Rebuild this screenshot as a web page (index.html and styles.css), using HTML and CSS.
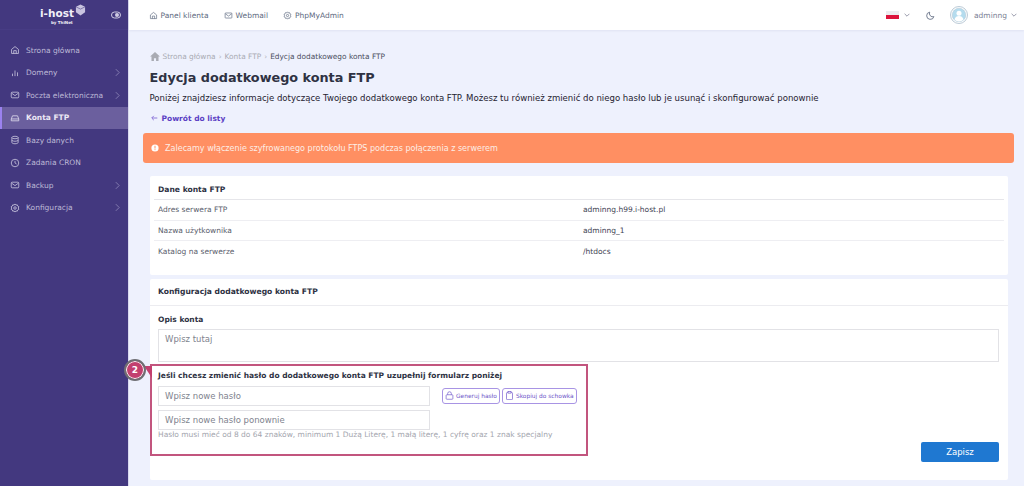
FILE: index.html
```html
<!DOCTYPE html>
<html lang="pl">
<head>
<meta charset="utf-8">
<title>Edycja dodatkowego konta FTP</title>
<link rel="stylesheet" href="styles.css">
</head>
<body>
<div class="app">
  <aside class="sidebar">
    <div class="brand">
      <div class="logo">
        <div class="logo-line"><span class="logo-name">i-host</span>
          <svg class="logo-cube" viewBox="0 0 12 13"><path d="M6 0.5 11 3v6l-5 3.5L1 9V3z" fill="#c9c4e0"/><path d="M1 3l5 2.5L11 3" fill="none" stroke="#43387f" stroke-width=".6"/></svg>
        </div>
        <div class="logo-sub">by ThiNet</div>
      </div>
      <svg class="toggle" viewBox="0 0 10 8"><rect x=".5" y="1" width="9" height="6" rx="3" fill="none" stroke="#cfcbe3"/><circle cx="6" cy="4" r="2" fill="#cfcbe3"/></svg>
    </div>
    <nav class="menu">
      <a class="item"><svg class="ico" viewBox="0 0 16 16"><path d="M2.500 7 8 2.500 13.500 7v6.500h-11zM6 13.500V9h4v4.500"/></svg><span>Strona główna</span></a>
      <a class="item"><svg class="ico" viewBox="0 0 16 16"><path d="M4 13V9M8 13V4M12 13V7"/></svg><span>Domeny</span><svg class="chev" viewBox="0 0 6 10"><path d="M1 1l4 4-4 4"/></svg></a>
      <a class="item"><svg class="ico" viewBox="0 0 16 16"><rect x="2" y="3.500" width="12" height="9" rx="1.500"/><path d="M2.500 5 8 9l5.500-4"/></svg><span>Poczta elektroniczna</span><svg class="chev" viewBox="0 0 6 10"><path d="M1 1l4 4-4 4"/></svg></a>
      <a class="item active"><svg class="ico" viewBox="0 0 16 16"><path d="M2 9.500 4 4.500h8l2 5v3H2zM2 9.500h12"/></svg><span>Konta FTP</span></a>
      <a class="item"><svg class="ico" viewBox="0 0 16 16"><ellipse cx="8" cy="4" rx="5" ry="2"/><path d="M3 4v8c0 1.100 2.200 2 5 2s5-.9 5-2V4M3 8c0 1.100 2.200 2 5 2s5-.9 5-2"/></svg><span>Bazy danych</span></a>
      <a class="item"><svg class="ico" viewBox="0 0 16 16"><circle cx="8" cy="8" r="6"/><path d="M8 4.500V8l2.500 1.500"/></svg><span>Zadania CRON</span></a>
      <a class="item"><svg class="ico" viewBox="0 0 16 16"><rect x="2" y="3.500" width="12" height="9" rx="1.500"/><path d="M2.500 5 8 9l5.500-4"/></svg><span>Backup</span><svg class="chev" viewBox="0 0 6 10"><path d="M1 1l4 4-4 4"/></svg></a>
      <a class="item"><svg class="ico" viewBox="0 0 16 16"><circle cx="8" cy="8" r="2"/><path d="M8 1.500l1.400 1.800 2.200-.4.600 2 1.900.9-.7 2.200.7 2.200-1.900.9-.6 2-2.200-.4L8 14.500l-1.400-1.800-2.200.4-.6-2-1.900-.9.700-2.200-.7-2.200 1.900-.9.600-2 2.200.4z"/></svg><span>Konfiguracja</span><svg class="chev" viewBox="0 0 6 10"><path d="M1 1l4 4-4 4"/></svg></a>
    </nav>
  </aside>
  <div class="main">
    <header class="topbar">
      <div class="toplinks">
        <a class="toplink"><svg class="tico" viewBox="0 0 16 16"><path d="M2.500 7 8 2.500 13.500 7v6.500h-11zM6 13.500V9h4v4.500"/></svg>Panel klienta</a>
        <a class="toplink"><svg class="tico" viewBox="0 0 16 16"><rect x="2" y="3.500" width="12" height="9" rx="1"/><path d="M2.500 5 8 9l5.500-4"/></svg>Webmail</a>
        <a class="toplink"><svg class="tico" viewBox="0 0 16 16"><circle cx="8" cy="8" r="2"/><path d="M8 1.500l1.400 1.800 2.200-.4.600 2 1.900.9-.7 2.200.7 2.200-1.900.9-.6 2-2.200-.4L8 14.500l-1.400-1.800-2.200.4-.6-2-1.900-.9.700-2.200-.7-2.200 1.900-.9.600-2 2.200.4z"/></svg>PhpMyAdmin</a>
      </div>
      <div class="topright">
        <span class="flag"></span>
        <svg class="caret caret-flag" viewBox="0 0 10 6"><path d="M1 1l4 4 4-4"/></svg>
        <svg class="moon" viewBox="0 0 16 16"><path d="M6.500 2a6.500 6.500 0 1 0 7.500 8A6 6 0 0 1 6.500 2z"/></svg>
        <svg class="avatar" viewBox="0 0 18 18"><circle cx="9" cy="9" r="8.500" fill="#fff" stroke="#a9bccb" stroke-width=".8"/><circle cx="9" cy="9" r="6.800" fill="#b5dcee" stroke="#a9bccb" stroke-width=".4"/><circle cx="9" cy="7.200" r="2.500" fill="#fff"/><path d="M4.500 13.500c.6-2.500 2.400-3.500 4.500-3.500s3.900 1 4.500 3.500A6.800 6.800 0 0 1 9 15.500a6.800 6.800 0 0 1-4.500-2z" fill="#fff"/></svg>
        <span class="user">adminng</span>
        <svg class="caret" viewBox="0 0 10 6"><path d="M1 1l4 4 4-4"/></svg>
      </div>
    </header>
    <main class="content">
      <div class="head">
        <div class="crumbs">
          <svg class="crumb-home" viewBox="0 0 12 11"><path d="M6 0 0 5.500h1.700V11h3V7.500h2.600V11h3V5.500H12z"/></svg>
          <span class="muted">Strona główna</span><span class="sep">›</span><span class="muted">Konta FTP</span><span class="sep">›</span><span class="current">Edycja dodatkowego konta FTP</span>
        </div>
        <h1>Edycja dodatkowego konta FTP</h1>
        <p class="lead">Poniżej znajdziesz informacje dotyczące Twojego dodatkowego konta FTP. Możesz tu również zmienić do niego hasło lub je usunąć i skonfigurować ponownie</p>
        <a class="back"><svg class="back-ico" viewBox="0 0 10 8"><path d="M9 4H1.500M4 1 1 4l3 3"/></svg>Powrót do listy</a>
      </div>
      <div class="alert">
        <svg class="alert-ico" viewBox="0 0 10 10"><circle cx="5" cy="5" r="4.500" fill="#fff"/><rect x="4.400" y="2.200" width="1.200" height="3.500" fill="#ff8f62"/><rect x="4.400" y="6.500" width="1.200" height="1.200" fill="#ff8f62"/></svg>
        Zalecamy włączenie szyfrowanego protokołu FTPS podczas połączenia z serwerem
      </div>
      <section class="card info">
        <h2 class="card-title">Dane konta FTP</h2>
        <div class="row"><span class="key">Adres serwera FTP</span><span class="val">adminng.h99.i-host.pl</span></div>
        <div class="row"><span class="key">Nazwa użytkownika</span><span class="val">adminng_1</span></div>
        <div class="row last"><span class="key">Katalog na serwerze</span><span class="val">/htdocs</span></div>
      </section>
      <section class="card config">
        <h2 class="card-title">Konfiguracja dodatkowego konta FTP</h2>
        <div class="form">
          <label class="label">Opis konta</label>
          <div class="input wide">Wpisz tutaj</div>
          <div class="pass-wrap">
            <span class="badge">2</span>
            <span class="badge-tail"></span>
            <label class="label pass-label">Jeśli chcesz zmienić hasło do dodatkowego konta FTP uzupełnij formularz poniżej</label>
            <div class="pass-row">
              <div class="input pass">Wpisz nowe hasło</div>
              <a class="mini"><svg viewBox="0 0 12 12"><rect x="1.500" y="5" width="9" height="6" rx="1"/><path d="M3.500 5V3.500a2.500 2.500 0 0 1 5 0V5"/></svg>Generuj hasło</a>
              <a class="mini"><svg viewBox="0 0 12 12"><rect x="2" y="2" width="8" height="9.500" rx="1"/><rect x="4" y=".8" width="4" height="2" fill="#fff"/></svg>Skopiuj do schowka</a>
            </div>
            <div class="input pass">Wpisz nowe hasło ponownie</div>
            <p class="hint">Hasło musi mieć od 8 do 64 znaków, minimum 1 Dużą Literę, 1 małą literę, 1 cyfrę oraz 1 znak specjalny</p>
          </div>
          <div class="actions"><a class="save">Zapisz</a></div>
        </div>
      </section>
    </main>
  </div>
</div>
</body>
</html>
```
FILE: styles.css
```css
* { box-sizing: border-box; }
html, body { margin: 0; height: 100%; overflow: hidden; }
body { font-family: "DejaVu Sans", sans-serif; font-size: 7.500px; color: #2e3243; background: #eef1fd; }
.app { display: flex; height: 486px; }

.sidebar { width: 129px; flex: none; background: #43387f; border-right: 1px solid #d8d8ee; }
.brand { height: 30px; display: flex; align-items: flex-start; justify-content: flex-end; position: relative; border-bottom: 1px solid #473c84; }
.logo { position: absolute; left: 40px; top: 4px; color: #f1eff8; }
.logo-line { display: flex; align-items: flex-start; gap: 1px; height: 15px; }
.logo-name { font-size: 10.500px; font-weight: bold; line-height: 19px; }
.logo-cube { width: 11px; height: 12px; }
.logo-sub { font-size: 4px; font-weight: bold; line-height: 5px; margin: 1px 0 0 11px; }
.toggle { width: 10px; height: 8px; margin: 11px 7px 0 0; }
.menu { padding-top: 9px; display: flex; flex-direction: column; }
.item { height: 22.500px; display: flex; align-items: center; padding-left: 10px; padding-right: 8px; color: #bdb8d6; gap: 6px; white-space: nowrap; }
.item span { flex: 1; }
.ico { width: 10px; height: 10px; flex: none; fill: none; stroke: #c9c5de; stroke-width: 1.300; }
.chev { width: 5px; height: 9px; flex: none; fill: none; stroke: #8f88b8; stroke-width: 1; }
.item.active { background: #6b5f9e; color: #ebe8f5; font-weight: bold; border-left: 2px solid #9b82f0; padding-left: 8px; }
.item.active .ico { stroke: #e0ddee; }

.main { flex: 1; min-width: 0; display: flex; flex-direction: column; }
.topbar { height: 30px; flex: none; background: #fff; display: flex; justify-content: space-between; align-items: center; padding: 0 7px 0 20px; box-shadow: 0 1px 2px rgba(60,60,120,.08); }
.toplinks { display: flex; gap: 15.500px; }
.toplink { display: flex; align-items: center; gap: 2.500px; color: #5e6a80; }
.tico { width: 9px; height: 9px; fill: none; stroke: #5e6a80; stroke-width: 1.200; }
.topright { display: flex; align-items: center; }
.flag { width: 13px; height: 8px; background: linear-gradient(#ececf0 50%, #dc143c 50%); }
.caret { width: 6px; height: 4px; fill: none; stroke: #7b8094; stroke-width: 1.300; margin-left: 4px; }
.caret-flag { margin-left: 5px; margin-right: 16px; }
.moon { width: 9px; height: 9px; fill: none; stroke: #5e6a80; stroke-width: 1.500; margin-right: 15px; }
.avatar { width: 18px; height: 18px; margin-right: 6px; }
.user { color: #7b8094; }

.content { flex: 1; padding: 20px 10px 0 14px; }
.head { padding-left: 6.500px; }
.crumbs { display: flex; align-items: center; height: 12px; gap: 3px; font-size: 7.400px; }
.crumb-home { width: 10px; height: 9px; fill: #a9abb3; }
.muted { color: #a9abb3; }
.sep { color: #b5b7bf; }
.current { color: #4a4e5e; }
h1 { margin: 6px 0 0; font-size: 12.800px; line-height: 20px; font-weight: bold; color: #2e3243; }
.lead { margin: 2.500px 0 0; font-size: 8.560px; line-height: 14px; color: #1f2230; white-space: nowrap; }
.back { display: flex; align-items: center; gap: 4px; margin: 7.500px 0 0 1px; height: 12px; font-weight: bold; color: #5b3fc4; font-size: 7.500px; }
.back-ico { width: 7px; height: 6px; fill: none; stroke: #7d63d3; stroke-width: 1.200; }
.alert { margin-top: 9px; height: 30px; background: #ff8f62; border-radius: 3px; display: flex; align-items: center; padding-left: 8px; gap: 6px; color: #fdeee6; font-size: 8.050px; }
.alert-ico { width: 8px; height: 8px; }
.card { background: #fff; margin: 0 6px 0 7px; border-radius: 2px; }
.card-title { margin: 0; font-size: 7.600px; font-weight: bold; padding: 0 8px; line-height: 24px; }
.info { margin-top: 13px; height: 98.500px; padding: 0 4px; }
.info .card-title { height: 24px; line-height: 27px; padding-left: 4px; border-bottom: 1px solid #e6e6ea; }
.row { display: flex; height: 20.500px; align-items: center; padding-left: 4px; border-bottom: 1px solid #eeeef2; color: #5a5e6c; }
.row.last { border-bottom: 0; }
.key { width: 425px; flex: none; }
.val { color: #3e4252; }
.config { margin-top: 4px; height: 201px; }
.config .card-title { height: 27px; line-height: 25px; border-bottom: 1px solid #ececf0; }
.form { padding: 8px 8px 0; }
.label { display: block; font-weight: bold; line-height: 12px; }
.input { height: 20.500px; background: #fff; border: 1px solid #e2e2e6; display: flex; align-items: center; padding-left: 6px; color: #80838e; font-size: 8.500px; }
.wide { margin-top: 3px; height: 33px; width: 841px; align-items: flex-start; padding-top: 4px; }
.pass-wrap { position: relative; margin-top: 2px; width: 438px; height: 92px; margin-left: -8px; padding: 5px 6px 0; border: 2px solid #c2557e; }
.pass-label { white-space: nowrap; line-height: 10px; }
.pass-row { display: flex; align-items: center; margin-top: 5px; margin-bottom: 3.500px; }
.pass { width: 272px; }
.pass-row .pass { margin-right: 12px; }
.mini { display: flex; align-items: center; gap: 2px; height: 16px; border: 1px solid #a894e4; border-radius: 3px; padding: 0 2px; margin-right: 2px; color: #6d55c9; font-size: 5.900px; white-space: nowrap; }
.mini svg { width: 9px; height: 9px; fill: none; stroke: #6d55c9; stroke-width: .9; }
.hint { margin: 0; font-size: 7.500px; line-height: 10px; color: #a3a5ae; white-space: nowrap; }
.badge { position: absolute; left: -28px; top: -7px; width: 22px; height: 22px; border-radius: 50%; background: #c2406f; border: 2px solid #6e6e73; box-shadow: inset 0 0 0 1px #fff; color: #fff; font-size: 9px; font-weight: bold; display: flex; align-items: center; justify-content: center; z-index: 2; }
.badge-tail { position: absolute; left: -8px; top: 0; width: 0; height: 0; border-top: 12px solid #c2406f; border-left: 8px solid transparent; }
.actions { display: flex; justify-content: flex-end; margin-top: -14px; width: 841px; }
.save { width: 78px; height: 20px; background: #1f78d1; border-radius: 2px; color: #fff; font-size: 8.500px; display: flex; align-items: center; justify-content: center; }
```
